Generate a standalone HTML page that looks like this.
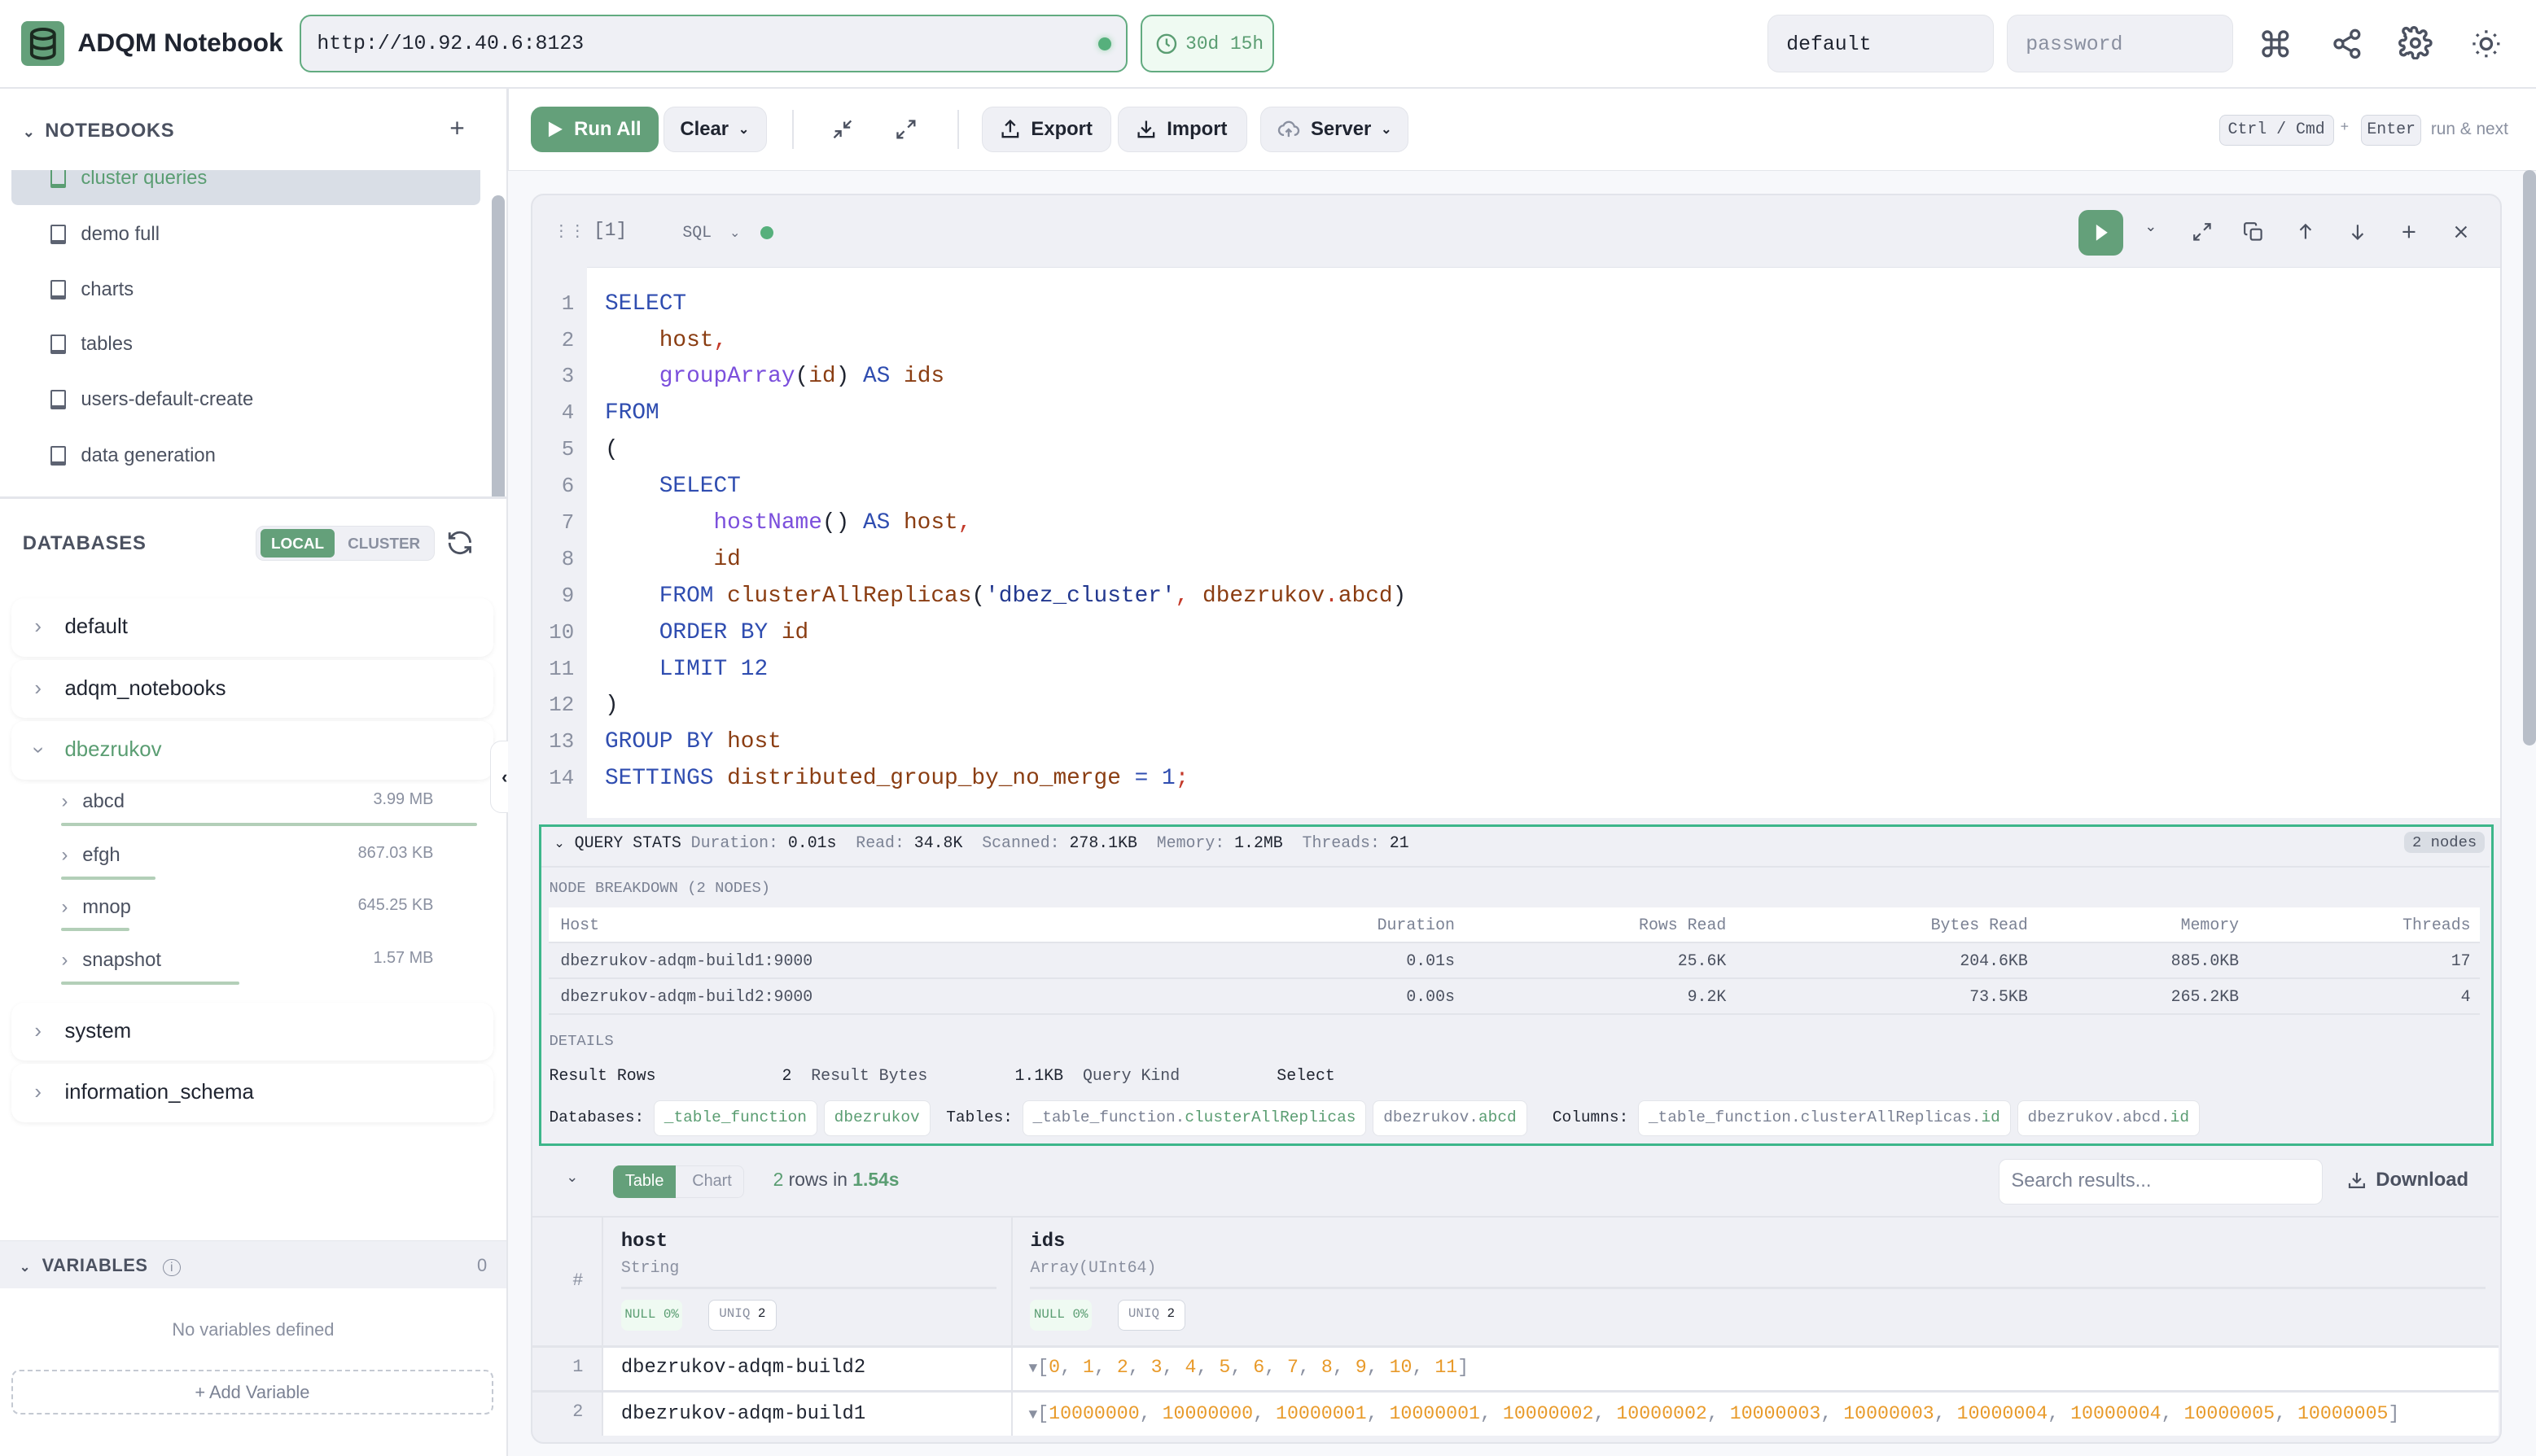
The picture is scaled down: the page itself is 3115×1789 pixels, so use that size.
<!DOCTYPE html>
<html><head><meta charset="utf-8"><style>
*{box-sizing:border-box;margin:0;padding:0}
html,body{width:3115px;height:1789px;overflow:hidden;background:#fff}
#w{zoom:1.9866;width:1568px;height:901px;position:relative;font-family:"Liberation Sans",sans-serif;color:#1f2430;overflow:hidden}
.a{position:absolute}
.m{font-family:"Liberation Mono",monospace}
.g{color:#5a9d72}
.mut{color:#7b8294}
svg{display:block}
.btn{position:absolute;top:66px;height:28px;border-radius:7px;background:#eff0f5;border:1px solid #e2e4ea;font-size:12px;font-weight:bold;display:flex;align-items:center;gap:6px;padding:0 10px;color:#1f2430;white-space:nowrap}
.nb{position:absolute;left:31px;font-size:12px;color:#4b5160;display:flex;align-items:center;gap:9px}
.nb i{display:inline-block;width:10px;height:12px;border:1.3px solid #5d6372;border-radius:1px;border-bottom-width:3px}
.db{position:absolute;left:7px;width:298px;height:36px;background:#fff;border-radius:8px;box-shadow:0 1px 3px rgba(0,0,0,.06);font-size:13px;display:flex;align-items:center}
.db b{font-weight:normal;color:#8a90a0;width:33px;text-align:center;font-size:13px}
.tb{position:absolute;left:38px;width:258px;font-size:12px;color:#4b5160}
.tb .s{position:absolute;right:28px;top:0;color:#8a90a0;font-size:10px}
.tb .bar{position:absolute;left:0;top:20px;height:2px;background:#b3cfb8;border-radius:1px}
.code div{height:22.6px;line-height:22.6px;white-space:pre}
.k{color:#2f4db0}.i{color:#8a3d12}.f{color:#7b4fdc}.s2{color:#22388f}.p{color:#c43a2a}
.ln div{height:22.6px;line-height:22.6px;text-align:right;padding-right:8px;color:#8a90a0}
.chip{display:inline-block;background:#fff;border:1px solid #e3e5ea;border-radius:4px;padding:2px 6px;margin-right:4px}
</style></head><body><div id="w">
<!-- header -->
<div class="a" style="left:0;top:0;width:1568px;height:55px;border-bottom:1.5px solid #e4e6eb"></div>
<div class="a" style="left:13px;top:13px;width:27px;height:28px;background:#64a07a;border-radius:4px"><svg width="27" height="28" viewBox="0 0 27 28" fill="none" stroke="#1b2a20" stroke-width="2"><ellipse cx="13.5" cy="8" rx="7" ry="3"/><path d="M6.5 8v12c0 1.7 3 3 7 3s7-1.3 7-3V8M6.5 14c0 1.7 3 3 7 3s7-1.3 7-3"/></svg></div>
<div class="a" style="left:48px;top:17px;font-size:16px;font-weight:bold">ADQM Notebook</div>
<div class="a" style="left:185px;top:9px;width:512px;height:36px;border:1.5px solid #62ab80;border-radius:7px;background:#eff0f5"></div>
<div class="a m" style="left:196px;top:20px;font-size:12.5px">http://10.92.40.6:8123</div>
<div class="a" style="left:679px;top:23px;width:8px;height:8px;border-radius:50%;background:#56b07c;box-shadow:0 0 4px #9bd5b0"></div>
<div class="a" style="left:705px;top:9px;width:83px;height:36px;border:1.5px solid #62ab80;border-radius:7px;background:#effaf2;display:flex;align-items:center;gap:5px;padding-left:9px;color:#5a9d72;font-size:11.5px"><svg width="13" height="13" viewBox="0 0 14 14" fill="none" stroke="#5a9d72" stroke-width="1.3"><circle cx="7" cy="7" r="6"/><path d="M7 3.5V7l2 1.5"/></svg><span class="m">30d 15h</span></div>
<div class="a m" style="left:1093px;top:9px;width:140px;height:36px;background:#eff0f5;border:1px solid #e3e5ea;border-radius:7px;padding:11px 11px;font-size:12.5px">default</div>
<div class="a m" style="left:1241px;top:9px;width:140px;height:36px;background:#eff0f5;border:1px solid #e3e5ea;border-radius:7px;padding:11px 11px;font-size:12.5px;color:#8a90a0">password</div>
<svg class="a" style="left:1397px;top:17px" width="20" height="20" viewBox="0 0 24 24" fill="none" stroke="#4b5160" stroke-width="2"><path d="M15 6v12a3 3 0 1 0 3-3H6a3 3 0 1 0 3 3V6a3 3 0 1 0-3 3h12a3 3 0 1 0-3-3"/></svg>
<svg class="a" style="left:1441px;top:17px" width="20" height="20" viewBox="0 0 24 24" fill="none" stroke="#4b5160" stroke-width="2"><circle cx="18" cy="5" r="3"/><circle cx="6" cy="12" r="3"/><circle cx="18" cy="19" r="3"/><path d="M8.6 13.5l6.8 4M15.4 6.5l-6.8 4"/></svg>
<svg class="a" style="left:1483px;top:16px" width="21" height="21" viewBox="0 0 24 24" fill="none" stroke="#4b5160" stroke-width="2"><circle cx="12" cy="12" r="3"/><path d="M19.4 15a1.7 1.7 0 0 0 .3 1.8l.1.1a2 2 0 1 1-2.8 2.8l-.1-.1a1.7 1.7 0 0 0-2.9 1.2V21a2 2 0 1 1-4 0v-.1A1.7 1.7 0 0 0 7 19.4a1.7 1.7 0 0 0-1.8.3l-.1.1a2 2 0 1 1-2.8-2.8l.1-.1A1.7 1.7 0 0 0 3.6 14H3a2 2 0 1 1 0-4h.1A1.7 1.7 0 0 0 4.6 7a1.7 1.7 0 0 0-.3-1.8l-.1-.1a2 2 0 1 1 2.8-2.8l.1.1A1.7 1.7 0 0 0 9 3.6V3a2 2 0 1 1 4 0v.1a1.7 1.7 0 0 0 2.9 1.2l.1-.1a2 2 0 1 1 2.8 2.8l-.1.1a1.7 1.7 0 0 0 1.2 2.9H21a2 2 0 1 1 0 4h-.1a1.7 1.7 0 0 0-1.5 1z"/></svg>
<svg class="a" style="left:1527px;top:17px" width="20" height="20" viewBox="0 0 24 24" fill="none" stroke="#4b5160" stroke-width="2"><circle cx="12" cy="12" r="4"/><path d="M12 2v2M12 20v2M4.9 4.9l1.4 1.4M17.7 17.7l1.4 1.4M2 12h2M20 12h2M4.9 19.1l1.4-1.4M17.7 6.3l1.4-1.4"/></svg>

<!-- sidebar -->
<div class="a" style="left:313px;top:55px;width:1.5px;height:846px;background:#e4e6eb"></div>
<div class="a" style="left:14px;top:74px;font-size:12px;font-weight:bold;color:#4b5160;letter-spacing:.3px"><span style="font-size:9px;margin-right:6px">&#8964;</span>NOTEBOOKS</div>
<div class="a" style="left:278px;top:70px;font-size:16px;color:#4b5160">+</div>
<div class="a" style="left:0;top:105px;width:313px;height:202px;overflow:hidden">
<div class="a" style="left:7px;top:-8px;width:290px;height:30px;background:#d9dee6;border-radius:4px"></div>
<div class="nb g" style="top:-2px;color:#5a9d72"><i style="border-color:#5a9d72"></i>cluster queries</div>
<div class="nb" style="top:33px"><i></i>demo full</div>
<div class="nb" style="top:67px"><i></i>charts</div>
<div class="nb" style="top:101px"><i></i>tables</div>
<div class="nb" style="top:135px"><i></i>users-default-create</div>
<div class="nb" style="top:170px"><i></i>data generation</div>
<div class="a" style="left:304px;top:16px;width:8px;height:190px;background:#b8bec8;border-radius:4px"></div>
</div>
<div class="a" style="left:0;top:307px;width:313px;height:1.5px;background:#e4e6eb"></div>
<div class="a" style="left:14px;top:329px;font-size:12px;font-weight:bold;color:#4b5160;letter-spacing:.4px">DATABASES</div>
<div class="a" style="left:158px;top:325px;width:111px;height:22px;background:#eff0f5;border:1px solid #e3e5ea;border-radius:5px"></div>
<div class="a" style="left:161px;top:327px;width:46px;height:18px;background:#64a07a;border-radius:3px;color:#fff;font-size:9.5px;font-weight:bold;text-align:center;line-height:18px">LOCAL</div>
<div class="a" style="left:215px;top:327px;font-size:9.5px;font-weight:bold;color:#8a90a0;line-height:18px">CLUSTER</div>
<svg class="a" style="left:276px;top:327px" width="17" height="17" viewBox="0 0 24 24" fill="none" stroke="#4b5160" stroke-width="2"><path d="M21 12a9 9 0 0 0-15.5-6.3L3 8M3 3v5h5M3 12a9 9 0 0 0 15.5 6.3L21 16M21 21v-5h-5"/></svg>
<div class="db" style="top:370px"><b>&#8250;</b>default</div>
<div class="db" style="top:408px"><b>&#8250;</b>adqm_notebooks</div>
<div class="db g" style="top:446px"><b style="transform:rotate(90deg)">&#8250;</b>dbezrukov</div>
<div class="tb" style="top:489px"><span style="color:#8a90a0;margin-right:9px">&#8250;</span>abcd<span class="s">3.99 MB</span><div class="bar" style="width:257px"></div></div>
<div class="tb" style="top:522px"><span style="color:#8a90a0;margin-right:9px">&#8250;</span>efgh<span class="s">867.03 KB</span><div class="bar" style="width:58px"></div></div>
<div class="tb" style="top:554px"><span style="color:#8a90a0;margin-right:9px">&#8250;</span>mnop<span class="s">645.25 KB</span><div class="bar" style="width:42px"></div></div>
<div class="tb" style="top:587px"><span style="color:#8a90a0;margin-right:9px">&#8250;</span>snapshot<span class="s">1.57 MB</span><div class="bar" style="width:110px"></div></div>
<div class="db" style="top:620px"><b>&#8250;</b>system</div>
<div class="db" style="top:658px"><b>&#8250;</b>information_schema</div>
<div class="a" style="left:303px;top:458px;width:18px;height:45px;background:#fff;border:1px solid #e3e5ea;border-radius:7px;text-align:center;line-height:44px;font-size:11px;font-weight:bold">&#8249;</div>
<div class="a" style="left:0;top:767px;width:313px;height:30px;background:#eff0f5;border-top:1px solid #e4e6eb"></div>
<div class="a" style="left:12px;top:776px;font-size:11px;font-weight:bold;color:#4b5160;letter-spacing:.3px"><span style="font-size:8px;margin-right:7px">&#8964;</span>VARIABLES <span style="display:inline-block;width:11px;height:11px;border:1px solid #8a90a0;border-radius:50%;font-size:8px;text-align:center;line-height:10px;color:#8a90a0;margin-left:6px;font-weight:normal">i</span></div>
<div class="a" style="left:295px;top:776px;font-size:11px;color:#8a90a0">0</div>
<div class="a" style="left:0;top:816px;width:313px;text-align:center;font-size:11px;color:#8a90a0">No variables defined</div>
<div class="a" style="left:7px;top:847px;width:298px;height:28px;border:1.2px dashed #c4c9d2;border-radius:5px;text-align:center;line-height:26px;font-size:11px;color:#7b8294">+ Add Variable</div>

<!-- toolbar -->
<div class="btn" style="left:328px;width:79px;background:#64a07a;border-color:#64a07a;color:#fff"><svg width="11" height="12" viewBox="0 0 11 12"><path d="M1 1l9 5-9 5z" fill="#fff"/></svg>Run All</div>
<div class="btn" style="left:410px;width:64px">Clear <span style="font-size:8px">&#8964;</span></div>
<div class="a" style="left:490px;top:68px;width:1px;height:24px;background:#e2e4ea"></div>
<svg class="a" style="left:514px;top:73px" width="14" height="14" viewBox="0 0 24 24" fill="none" stroke="#4b5160" stroke-width="2"><path d="M4 14h6v6M20 10h-6V4M14 10l7-7M3 21l7-7"/></svg>
<svg class="a" style="left:553px;top:73px" width="14" height="14" viewBox="0 0 24 24" fill="none" stroke="#4b5160" stroke-width="2"><path d="M15 3h6v6M9 21H3v-6M21 3l-7 7M3 21l7-7"/></svg>
<div class="a" style="left:592px;top:68px;width:1px;height:24px;background:#e2e4ea"></div>
<div class="btn" style="left:607px;width:80px"><svg width="14" height="14" viewBox="0 0 24 24" fill="none" stroke="#1f2430" stroke-width="2"><path d="M12 15V3M7 8l5-5 5 5M4 15v5h16v-5"/></svg>Export</div>
<div class="btn" style="left:691px;width:80px"><svg width="14" height="14" viewBox="0 0 24 24" fill="none" stroke="#1f2430" stroke-width="2"><path d="M12 3v12M7 10l5 5 5-5M4 15v5h16v-5"/></svg>Import</div>
<div class="btn" style="left:779px;width:92px"><svg width="15" height="14" viewBox="0 0 24 24" fill="none" stroke="#8a90a0" stroke-width="2"><path d="M7 18a5 5 0 0 1-.5-10A6 6 0 0 1 18 9a4.5 4.5 0 0 1 0 9M12 20v-8M9 15l3-3 3 3"/></svg>Server <span style="font-size:8px">&#8964;</span></div>
<div class="a m" style="left:1372px;top:71px;width:71px;height:19px;border:1px solid #d4d8e0;border-radius:4px;background:#eff0f5;font-size:10px;text-align:center;line-height:17px;color:#4b5160">Ctrl / Cmd</div>
<div class="a" style="left:1447px;top:73px;font-size:9px;color:#8a90a0">+</div>
<div class="a m" style="left:1460px;top:71px;width:37px;height:19px;border:1px solid #d4d8e0;border-radius:4px;background:#eff0f5;font-size:10px;text-align:center;line-height:17px;color:#4b5160">Enter</div>
<div class="a" style="left:1503px;top:74px;font-size:10.5px;color:#8a90a0">run &amp; next</div>

<!-- main bg -->
<div class="a" style="left:314px;top:105px;width:1254px;height:796px;background:#f7f8fb;border-top:1px solid #e4e6eb"></div>
<div class="a" style="left:1560px;top:105px;width:8px;height:356px;background:#b8bec8;border-radius:4px"></div>

<!-- cell -->
<div class="a" style="left:328px;top:120px;width:1219px;height:773px;background:#eff0f5;border:1.5px solid #e2e4ea;border-radius:8px;overflow:hidden">
 <div class="a m" style="left:13px;top:16px;font-size:10px;color:#8a90a0">&#8942;&#8942;</div>
 <div class="a m" style="left:38px;top:15px;font-size:11.5px;color:#6b7182">[1]</div>
 <div class="a m" style="left:93px;top:17px;font-size:10px;color:#6b7182">SQL <span style="font-size:8px;margin-left:5px">&#8964;</span></div>
 <div class="a" style="left:141px;top:19px;width:8px;height:8px;border-radius:50%;background:#56b07c"></div>
 <div class="a" style="left:956px;top:9px;width:28px;height:28px;border-radius:6px;background:#64a07a"><svg width="28" height="28" viewBox="0 0 28 28"><path d="M11 9l7 5-7 5z" fill="#fff"/></svg></div>
 <div class="a" style="left:997px;top:14px;font-size:9px;color:#4b5160">&#8964;</div>
 <svg class="a" style="left:1026px;top:16px" width="13" height="13" viewBox="0 0 24 24" fill="none" stroke="#4b5160" stroke-width="2"><path d="M15 3h6v6M9 21H3v-6M21 3l-7 7M3 21l7-7"/></svg>
 <svg class="a" style="left:1058px;top:16px" width="13" height="13" viewBox="0 0 24 24" fill="none" stroke="#4b5160" stroke-width="2"><rect x="9" y="9" width="12" height="12" rx="2"/><path d="M5 15H4a2 2 0 0 1-2-2V4a2 2 0 0 1 2-2h9a2 2 0 0 1 2 2v1"/></svg>
 <svg class="a" style="left:1090px;top:16px" width="13" height="13" viewBox="0 0 24 24" fill="none" stroke="#4b5160" stroke-width="2"><path d="M12 20V4M6 10l6-6 6 6"/></svg>
 <svg class="a" style="left:1122px;top:16px" width="13" height="13" viewBox="0 0 24 24" fill="none" stroke="#4b5160" stroke-width="2"><path d="M12 4v16M6 14l6 6 6-6"/></svg>
 <svg class="a" style="left:1154px;top:16px" width="13" height="13" viewBox="0 0 24 24" fill="none" stroke="#4b5160" stroke-width="2"><path d="M12 5v14M5 12h14"/></svg>
 <svg class="a" style="left:1186px;top:16px" width="13" height="13" viewBox="0 0 24 24" fill="none" stroke="#4b5160" stroke-width="2"><path d="M6 6l12 12M18 6L6 18"/></svg>
 <div class="a" style="left:0;top:44px;width:1219px;height:341px;background:#fff;border-top:1px solid #e2e4ea"></div>
 <div class="a m ln" style="left:0;top:44px;width:34px;height:341px;background:#eff0f5;padding-top:12px;font-size:13px">
  <div>1</div><div>2</div><div>3</div><div>4</div><div>5</div><div>6</div><div>7</div><div>8</div><div>9</div><div>10</div><div>11</div><div>12</div><div>13</div><div>14</div></div>
 <div class="a m code" style="left:45px;top:56px;font-size:14px;color:#1f2430">
<div class="k">SELECT</div>
<div>    <span class="i">host</span><span class="p">,</span></div>
<div>    <span class="f">groupArray</span>(<span class="i">id</span>) <span class="k">AS</span> <span class="i">ids</span></div>
<div class="k">FROM</div>
<div>(</div>
<div>    <span class="k">SELECT</span></div>
<div>        <span class="f">hostName</span>() <span class="k">AS</span> <span class="i">host</span><span class="p">,</span></div>
<div>        <span class="i">id</span></div>
<div>    <span class="k">FROM</span> <span class="i">clusterAllReplicas</span>(<span class="s2">'dbez_cluster'</span><span class="p">,</span> <span class="i">dbezrukov</span><span class="p">.</span><span class="i">abcd</span>)</div>
<div>    <span class="k">ORDER BY</span> <span class="i">id</span></div>
<div>    <span class="k">LIMIT 12</span></div>
<div>)</div>
<div><span class="k">GROUP BY</span> <span class="i">host</span></div>
<div><span class="k">SETTINGS</span> <span class="i">distributed_group_by_no_merge</span> <span class="k">=</span> <span class="k">1</span><span class="p">;</span></div>
 </div>
</div>

<!-- query stats -->
<div class="a m" style="left:333px;top:510px;width:1209px;height:199px;border:2px solid #3db68a;background:#eff0f5;font-size:10px;color:#4b5160">
 <div class="a" style="left:8px;top:4px;color:#1f2430;white-space:pre"><span style="font-size:8px">&#8964;</span> QUERY STATS <span class="mut">Duration:</span> 0.01s  <span class="mut">Read:</span> 34.8K  <span class="mut">Scanned:</span> 278.1KB  <span class="mut">Memory:</span> 1.2MB  <span class="mut">Threads:</span> 21</div>
 <div class="a" style="left:1152px;top:3px;padding:1px 5px;background:#d9dde4;border-radius:4px;font-size:9.5px">2 nodes</div>
 <div class="a" style="left:0;top:24px;width:1205px;height:1px;background:#e2e4ea"></div>
 <div class="a mut" style="left:5px;top:32px;font-size:9.5px">NODE BREAKDOWN (2 NODES)</div>
 <div class="a" style="left:5px;top:50px;width:1194px;height:21px;background:#fff"></div>
 <div class="a" style="left:5px;top:71px;width:1194px;height:1px;background:#e2e4ea"></div>
 <div class="a" style="left:5px;top:93px;width:1194px;height:1px;background:#e2e4ea"></div>
 <div class="a" style="left:5px;top:115px;width:1194px;height:1px;background:#e2e4ea"></div>
 <table class="a" style="left:5px;top:50px;width:1194px;border-collapse:collapse;font-size:10px;color:#4b5160">
  <tr style="height:21px;color:#7b8294"><td style="padding-left:7px">Host</td><td align="right">Duration</td><td align="right">Rows Read</td><td align="right">Bytes Read</td><td align="right">Memory</td><td align="right" style="padding-right:6px">Threads</td></tr>
  <tr style="height:23px"><td style="padding-left:7px;width:420px">dbezrukov-adqm-build1:9000</td><td align="right" style="width:140px">0.01s</td><td align="right">25.6K</td><td align="right">204.6KB</td><td align="right">885.0KB</td><td align="right" style="padding-right:6px">17</td></tr>
  <tr style="height:22px"><td style="padding-left:7px">dbezrukov-adqm-build2:9000</td><td align="right">0.00s</td><td align="right">9.2K</td><td align="right">73.5KB</td><td align="right">265.2KB</td><td align="right" style="padding-right:6px">4</td></tr>
 </table>
 <div class="a mut" style="left:5px;top:127px;font-size:9.5px">DETAILS</div>
 <div class="a" style="left:5px;top:148px;color:#1f2430;white-space:pre">Result Rows             2  <span style="color:#4b5160">Result Bytes</span>         1.1KB  <span style="color:#4b5160">Query Kind</span>          Select</div>
 <div class="a" style="left:5px;top:169px;color:#1f2430;white-space:pre;line-height:17px;font-size:9.8px">Databases: <span class="chip g">_table_function</span><span class="chip g">dbezrukov</span> Tables: <span class="chip"><span class="mut">_table_function.</span><span class="g">clusterAllReplicas</span></span><span class="chip"><span class="mut">dbezrukov.</span><span class="g">abcd</span></span>  Columns: <span class="chip"><span class="mut">_table_function.clusterAllReplicas.</span><span class="g">id</span></span><span class="chip"><span class="mut">dbezrukov.abcd.</span><span class="g">id</span></span></div>
</div>

<!-- results -->
<div class="a" style="left:350px;top:723px;font-size:9px;color:#4b5160">&#8964;</div>
<div class="a" style="left:379px;top:721px;width:81px;height:20px;border:1px solid #e2e4ea;border-radius:4px;background:#eff0f5"></div>
<div class="a" style="left:379px;top:721px;width:39px;height:20px;background:#64a07a;border-radius:4px 0 0 4px;color:#fff;font-size:10px;text-align:center;line-height:20px">Table</div>
<div class="a" style="left:428px;top:725px;font-size:10px;color:#8a90a0">Chart</div>
<div class="a" style="left:478px;top:723px;font-size:11.5px;color:#4b5160"><span class="g">2</span>  rows in <b class="g">1.54s</b></div>
<div class="a" style="left:1236px;top:717px;width:200px;height:28px;background:#fff;border:1px solid #e2e4ea;border-radius:5px;padding:6px 7px;font-size:12px;color:#7b8294">Search results...</div>
<div class="a" style="left:1451px;top:723px;font-size:12px;font-weight:bold;color:#4b5160;display:flex;gap:6px;align-items:center"><svg width="12" height="12" viewBox="0 0 24 24" fill="none" stroke="#4b5160" stroke-width="2.2"><path d="M12 3v12M7 10l5 5 5-5M3 16v5h18v-5"/></svg>Download</div>
<div class="a" style="left:329px;top:752px;width:1216px;height:1px;background:#e2e4ea"></div>
<div class="a" style="left:372px;top:752px;width:1px;height:136px;background:#e2e4ea"></div>
<div class="a" style="left:625px;top:752px;width:1px;height:136px;background:#e2e4ea"></div>
<div class="a m" style="left:354px;top:786px;font-size:11px;color:#8a90a0">#</div>
<div class="a m" style="left:384px;top:761px;font-size:12px;font-weight:bold">host</div>
<div class="a m" style="left:384px;top:778px;font-size:10px;color:#8a90a0">String</div>
<div class="a" style="left:384px;top:796px;width:232px;height:1.5px;background:#e2e4ea"></div>
<div class="a m" style="left:384px;top:804px;width:38px;height:19px;background:#effaf2;border-radius:4px;font-size:8px;color:#5a9d72;text-align:center;line-height:19px">NULL 0%</div>
<div class="a m" style="left:438px;top:804px;width:42px;height:19px;background:#fff;border:1px solid #d4d8e0;border-radius:4px;font-size:8px;color:#8a90a0;text-align:center;line-height:17px">UNIQ <span style="color:#1f2430">2</span></div>
<div class="a m" style="left:637px;top:761px;font-size:12px;font-weight:bold">ids</div>
<div class="a m" style="left:637px;top:778px;font-size:10px;color:#8a90a0">Array(UInt64)</div>
<div class="a" style="left:637px;top:796px;width:900px;height:1.5px;background:#e2e4ea"></div>
<div class="a m" style="left:637px;top:804px;width:38px;height:19px;background:#effaf2;border-radius:4px;font-size:8px;color:#5a9d72;text-align:center;line-height:19px">NULL 0%</div>
<div class="a m" style="left:691px;top:804px;width:42px;height:19px;background:#fff;border:1px solid #d4d8e0;border-radius:4px;font-size:8px;color:#8a90a0;text-align:center;line-height:17px">UNIQ <span style="color:#1f2430">2</span></div>
<div class="a" style="left:373px;top:832px;width:1172px;height:28px;background:#fff;border-top:1.5px solid #e2e4ea"></div>
<div class="a" style="left:373px;top:860px;width:1172px;height:28px;background:#fff;border-top:1.5px solid #e2e4ea"></div>
<div class="a" style="left:625px;top:832px;width:1px;height:56px;background:#e2e4ea"></div>
<div class="a" style="left:329px;top:832px;width:1216px;height:1.5px;background:#e2e4ea"></div>
<div class="a" style="left:329px;top:860px;width:1216px;height:1.5px;background:#e2e4ea"></div>
<div class="a m" style="left:354px;top:839px;font-size:11px;color:#8a90a0">1</div>
<div class="a m" style="left:354px;top:867px;font-size:11px;color:#8a90a0">2</div>
<div class="a m" style="left:384px;top:839px;font-size:12px">dbezrukov-adqm-build2</div>
<div class="a m" style="left:384px;top:868px;font-size:12px">dbezrukov-adqm-build1</div>
<div class="a m" style="left:636px;top:839px;font-size:11.7px;color:#8a90a0;white-space:pre"><span style="font-size:9px">&#9660;</span>[<span style="color:#e89a2a">0</span>, <span style="color:#e89a2a">1</span>, <span style="color:#e89a2a">2</span>, <span style="color:#e89a2a">3</span>, <span style="color:#e89a2a">4</span>, <span style="color:#e89a2a">5</span>, <span style="color:#e89a2a">6</span>, <span style="color:#e89a2a">7</span>, <span style="color:#e89a2a">8</span>, <span style="color:#e89a2a">9</span>, <span style="color:#e89a2a">10</span>, <span style="color:#e89a2a">11</span>]</div>
<div class="a m" style="left:636px;top:868px;font-size:11.7px;color:#8a90a0;white-space:pre"><span style="font-size:9px">&#9660;</span>[<span style="color:#e89a2a">10000000</span>, <span style="color:#e89a2a">10000000</span>, <span style="color:#e89a2a">10000001</span>, <span style="color:#e89a2a">10000001</span>, <span style="color:#e89a2a">10000002</span>, <span style="color:#e89a2a">10000002</span>, <span style="color:#e89a2a">10000003</span>, <span style="color:#e89a2a">10000003</span>, <span style="color:#e89a2a">10000004</span>, <span style="color:#e89a2a">10000004</span>, <span style="color:#e89a2a">10000005</span>, <span style="color:#e89a2a">10000005</span>]</div>
</div></body></html>
